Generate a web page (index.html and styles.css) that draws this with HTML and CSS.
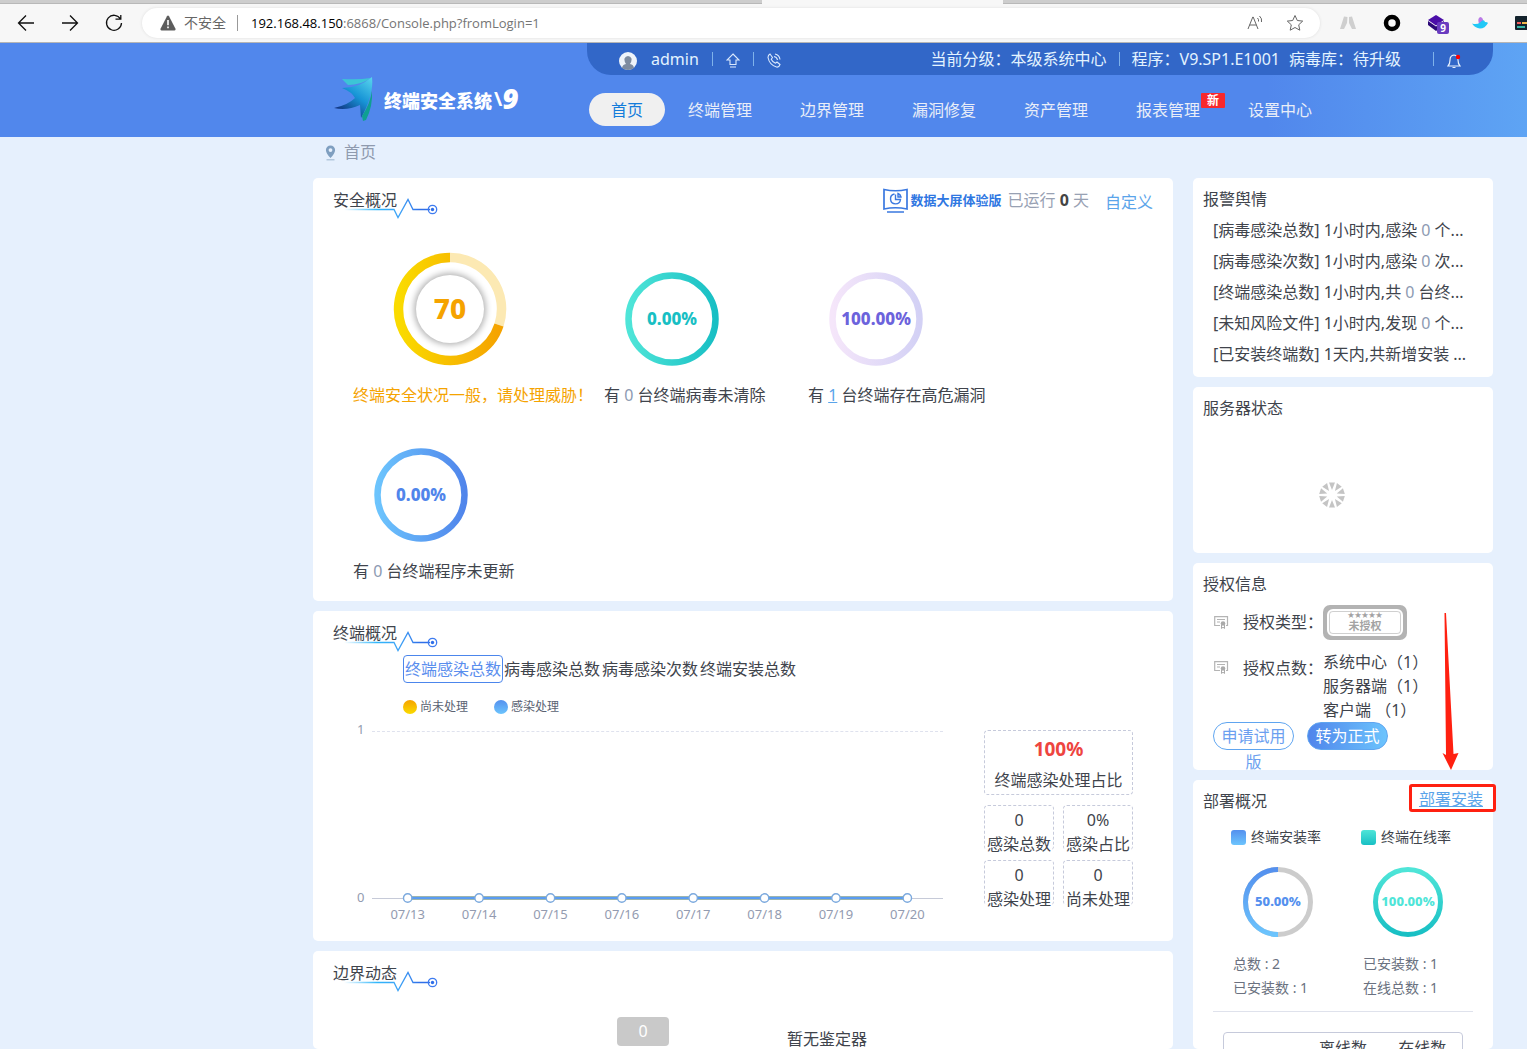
FILE: index.html
```html
<!DOCTYPE html>
<html lang="zh-CN">
<head>
<meta charset="utf-8">
<meta name="viewport" content="width=device-width, initial-scale=1">
<title>终端安全系统</title>
<link rel="stylesheet" href="styles.css">
</head>
<body>
<svg class="defs" aria-hidden="true">
  <defs>
    <linearGradient id="pulse" gradientUnits="userSpaceOnUse" x1="0" y1="0" x2="95" y2="0"><stop offset="0" stop-color="#2fb6fb" stop-opacity="0"/><stop offset=".35" stop-color="#2fb6fb"/><stop offset=".6" stop-color="#3fa0f5"/><stop offset=".8" stop-color="#2f6fe8"/></linearGradient>
    <linearGradient id="gold"><stop offset="0" stop-color="#fadb00"/><stop offset="1" stop-color="#f5a300"/></linearGradient>
    <linearGradient id="teal"><stop offset="0" stop-color="#4fe5d8"/><stop offset="1" stop-color="#18bfc4"/></linearGradient>
    <linearGradient id="tealDown" x1="0" y1="0" x2="0" y2="1"><stop offset="0" stop-color="#4fe5d8"/><stop offset="1" stop-color="#18bfc4"/></linearGradient>
    <linearGradient id="lilac"><stop offset="0" stop-color="#f5e6fa"/><stop offset="1" stop-color="#d3d1f5"/></linearGradient>
    <linearGradient id="blue"><stop offset="0" stop-color="#6cc4fd"/><stop offset="1" stop-color="#5085eb"/></linearGradient>
    <linearGradient id="blueDown" x1="0" y1="0" x2="0" y2="1"><stop offset="0" stop-color="#5490ee"/><stop offset="1" stop-color="#6cc4fd"/></linearGradient>
    <symbol id="pulse-line" viewBox="0 0 95 22"><path d="M0 12.5H50L54 20.5L64 2.5L69 12.5H86" fill="none" stroke="url(#pulse)" stroke-width="1.3"/><circle cx="88.500" cy="12.500" r="4.200" fill="none" stroke="#3d7bf0" stroke-width="1.300"/><circle cx="88.500" cy="12.500" r="1.700" fill="#2f6fe8"/></symbol>
    <symbol id="cert" viewBox="0 0 15 13"><path d="M6 9.500H.7V.7H13.500V9.500H12M3 3.500H11M3 6H6" fill="none" stroke="#b4b4b4" stroke-width="1.200"/><circle cx="9" cy="7.500" r="2.300" fill="#aaa"/><path d="M7.500 9V12.500L9 11.200L10.500 12.500V9" fill="none" stroke="#aaa"/></symbol>
  </defs>
</svg>

<div class="browser">
  <div class="tabstrip"><span class="tab-gap"></span></div>
  <div class="toolbar">
    <button class="tool" aria-label="后退"><svg width="18" height="18" viewBox="0 0 18 18"><path d="M17 9H2M9 1.500L1.500 9L9 16.500"/></svg></button>
    <button class="tool" aria-label="前进"><svg width="18" height="18" viewBox="0 0 18 18"><path d="M1 9H16M9 1.500L16.500 9L9 16.500"/></svg></button>
    <button class="tool" aria-label="刷新"><svg width="18" height="18" viewBox="0 0 18 18"><path d="M15.500 5A7.500 7.500 0 1 0 16.500 9M10.500 5.200H15.800V1"/></svg></button>
    <div class="address">
      <svg width="16" height="16" viewBox="0 0 16 16"><path d="M8 .5Q8.600.5 9 1.200L15.500 13.800Q16 15.500 14.500 15.500H1.500Q0 15.500.5 13.800L7 1.200Q7.400.5 8 .5Z" fill="#5c5c5c"/><path d="M8 5V10.200M8 11.500V13.300" stroke="#fff" stroke-width="1.600"/></svg>
      <span class="insecure">不安全</span>
      <span class="address-sep"></span>
      <span class="url"><span class="host">192.168.48.150</span>:6868/Console.php?fromLogin=1</span>
      <svg class="read" width="17" height="16" viewBox="0 0 17 16"><path d="M1 14L5.800 2H6.200L11 14M2.600 10H9.400M10.500 3Q12 4.500 11.500 6.500M12.500 1Q15.300 3.500 14.500 7" fill="none" stroke="#666"/></svg>
      <svg width="18" height="18" viewBox="0 0 18 18"><path d="M9 1.500L11.300 6.500L16.700 7.100L12.700 10.800L13.800 16.200L9 13.500L4.200 16.200L5.300 10.800L1.300 7.100L6.700 6.500Z" fill="none" stroke="#666" stroke-linejoin="round"/></svg>
    </div>
    <div class="extensions">
      <svg width="18" height="18" viewBox="0 0 18 18"><path d="M5 2.500L8.500 3L8 9L5 15H1ZM10 3L13 2.500L17 15H13L10 9Z" fill="#cfcfcf"/></svg>
      <svg width="18" height="18" viewBox="0 0 18 18"><circle cx="9" cy="9" r="6" fill="none" stroke="#000" stroke-width="4.500"/></svg>
      <span class="ext-badged"><svg width="18" height="18" viewBox="0 0 18 18"><path d="M9 1L17 6L9 11.500L1 6Z" fill="#4b0ea8"/><path d="M1 7L9 12.500L17 7V11L9 17L1 11Z" fill="#2c0878"/></svg><span class="ext-badge">9</span></span>
      <svg width="18" height="18" viewBox="0 0 18 18"><path d="M8 10Q6 4 9.500 3Q13 4 12 10Z" fill="#b97ae6"/><path d="M1 9.500Q6 11 9 8.500Q13 4.500 14 8Q16.500 8 17 9Q14 14.500 9 14.500Q4 14 1 9.500Z" fill="#21c8f6"/></svg>
      <svg width="18" height="18" viewBox="0 0 18 18"><rect y="2" width="18" height="14" rx="1" fill="#14232d"/><path d="M2 9H6" stroke="#f15b5b" stroke-width="2"/><path d="M7 9H12" stroke="#f0b84a" stroke-width="2"/><path d="M2 13H10" stroke="#37b6a8" stroke-width="2"/></svg>
    </div>
  </div>
</div>

<header class="header">
  <div class="logo">
    <svg width="44" height="46" viewBox="0 0 44 46">
      <defs><linearGradient id="bird" x1="1" y1="0" x2=".3" y2="1"><stop offset="0" stop-color="#5ad6ee"/><stop offset=".5" stop-color="#1794d6"/><stop offset="1" stop-color="#102a78"/></linearGradient></defs>
      <path d="M8 3Q24 4 37 2Q27 9 14 9Z" fill="#3cc5d6"/>
      <path d="M8 12Q25 12 38 1Q40 19 27 42L26 29Q13 35 0 32Q14 29 21 22Q18 16 8 12Z" fill="url(#bird)"/>
      <path d="M38 15Q39 30 32 44L29 45L28 40Q36 28 38 15Z" fill="#0f9f92"/>
    </svg>
    <span class="logo-text">终端安全系统</span><span class="logo-slash">\</span><span class="logo-nine">9</span>
  </div>
  <div class="header-main">
    <div class="userbar">
      <svg class="avatar" width="18" height="18" viewBox="0 0 18 18"><circle cx="9" cy="9" r="9" fill="#eef3fa"/><path d="M3 16Q3.500 12.500 7 12Q5 9 5.500 6.500Q6.500 4 9 4T12.500 6.500Q13 9 11 12Q14.500 12.500 15 16Q9 20 3 16Z" fill="#7d8ba0"/></svg>
      <span class="username">admin</span>
      <span class="sep"></span>
      <svg width="14" height="15" viewBox="0 0 14 15"><path d="M7 1L13 7H10V11.500H4V7H1ZM4 14H10" fill="none" stroke="#dbe9fd" stroke-width="1.100"/></svg>
      <span class="sep"></span>
      <svg width="14" height="15" viewBox="0 0 14 15"><path d="M3 1L5.500 4.500L4.200 6.200Q5.500 9 8.500 10.200L10 9L13 11.500Q12 14.500 9.500 14Q2.500 12 1 4.500Q1 2 3 1ZM7 3.500Q10 4 10.500 7M8 1Q12.500 2 13 6.500" fill="none" stroke="#dbe9fd" stroke-width="1.100"/></svg>
      <span class="level">当前分级：本级系统中心</span>
      <span class="sep"></span>
      <span class="program">程序：V9.SP1.E1001</span>
      <span class="virus">病毒库：待升级</span>
      <span class="sep"></span>
      <svg class="bell" width="14" height="16" viewBox="0 0 14 16"><path d="M7 2Q3 2.500 3 7Q3 11 1 13H13Q11 11 11 7Q11 2.500 7 2ZM5.500 14.500H8.500" fill="none" stroke="#e8f1fd" stroke-width="1.200"/><circle cx="11" cy="4" r="2.200" fill="#f00"/></svg>
    </div>
    <nav class="nav">
      <a class="nav-item active" href="#">首页</a>
      <a class="nav-item" href="#">终端管理</a>
      <a class="nav-item" href="#">边界管理</a>
      <a class="nav-item" href="#">漏洞修复</a>
      <a class="nav-item" href="#">资产管理</a>
      <a class="nav-item" href="#">报表管理<span class="new">新</span></a>
      <a class="nav-item" href="#">设置中心</a>
    </nav>
  </div>
</header>

<div class="breadcrumb">
  <svg width="11" height="16" viewBox="0 0 11 16"><path d="M5.500.500A4.600 4.600 0 0 1 10.100 5Q10 8.500 5.500 13Q1 8.500.900 5A4.600 4.600 0 0 1 5.500.500ZM5.500 3.200A1.900 1.900 0 1 0 5.500 7A1.900 1.900 0 1 0 5.500 3.200Z" fill="#7f9fc0" fill-rule="evenodd"/><path d="M1.500 14.800H9.500" stroke="#a5bdd5" stroke-width="1.200"/></svg>
  <span>首页</span>
</div>

<main class="content">
  <div class="column">
    <section class="card security">
      <div class="card-head">
        <h2 class="title">安全概况<svg class="pulse" width="95" height="22"><use href="#pulse-line"/></svg></h2>
        <div class="head-tools">
          <svg width="25" height="25" viewBox="0 0 25 25"><path d="M1 1.500Q12.500 4 24 1.500V21Q12.500 18.500 1 21ZM4 24H21" fill="none" stroke="#3a78e0" stroke-width="1.700"/><path d="M11.500 6A5 5 0 1 0 17.500 11.500H12.500V6.500M15 5.500Q17.500 6.500 18 9H15Z" fill="none" stroke="#3a78e0" stroke-width="1.400"/></svg>
          <a class="bigscreen" href="#">数据大屏体验版</a>
          <span class="uptime">已运行 <b>0</b> 天</span>
          <a class="custom" href="#">自定义</a>
        </div>
      </div>
      <div class="gauges">
        <div class="gauge main-gauge">
          <svg width="114" height="114" viewBox="0 0 114 114">
            <defs><filter id="soft" x="-30%" y="-30%" width="160%" height="160%"><feGaussianBlur stdDeviation="3"/></filter></defs>
            <path d="M57 5.500A51.500 51.500 0 0 1 106 73" fill="none" stroke="#fce9b3" stroke-width="9.500"/>
            <path d="M106 73A51.500 51.500 0 1 1 57 5.500" fill="none" stroke="url(#gold)" stroke-width="9.500"/>
            <circle cx="57" cy="57" r="36" fill="#000" opacity=".3" filter="url(#soft)"/>
            <circle cx="57" cy="57" r="34" fill="#fff"/>
            <text class="score" x="57" y="67" text-anchor="middle">70</text>
          </svg>
          <p>终端安全状况一般，请处理威胁！</p>
        </div>
        <div class="gauge teal">
          <svg width="94" height="94"><circle cx="47" cy="47" r="43.500" fill="none" stroke="url(#teal)" stroke-width="6.500"/><text x="47" y="53" text-anchor="middle">0.00%</text></svg>
          <p>有 <i>0</i> 台终端病毒未清除</p>
        </div>
        <div class="gauge lilac">
          <svg width="94" height="94"><circle cx="47" cy="47" r="43.500" fill="none" stroke="url(#lilac)" stroke-width="6.500"/><text x="47" y="53" text-anchor="middle">100.00%</text></svg>
          <p>有 <a href="#">1</a> 台终端存在高危漏洞</p>
        </div>
        <div class="gauge blue">
          <svg width="94" height="94"><circle cx="47" cy="47" r="43.500" fill="none" stroke="url(#blue)" stroke-width="6.500"/><text x="47" y="53" text-anchor="middle">0.00%</text></svg>
          <p>有 <i>0</i> 台终端程序未更新</p>
        </div>
      </div>
    </section>

    <section class="card terminals">
      <h2 class="title">终端概况<svg class="pulse" width="95" height="22"><use href="#pulse-line"/></svg></h2>
      <div class="tabs">
        <button class="tab selected">终端感染总数</button>
        <button class="tab">病毒感染总数</button>
        <button class="tab">病毒感染次数</button>
        <button class="tab">终端安装总数</button>
      </div>
      <div class="legend">
        <span class="key"><span class="dot gold"></span>尚未处理</span>
        <span class="key"><span class="dot azure"></span>感染处理</span>
      </div>
      <div class="overview">
        <div class="chart">
          <div class="y-axis"><span>1</span><span>0</span></div>
          <div class="plot">
            <svg class="series" width="100%" height="12">
              <line x1="6.25%" y1="6" x2="93.75%" y2="6" stroke="#9db5ae" stroke-width="4"/>
              <line x1="6.25%" y1="6" x2="93.75%" y2="6" stroke="#5a9cf2" stroke-width="2"/>
              <g fill="#fff" stroke="#7ba9de" stroke-width="1.400"><circle cx="6.25%" cy="6" r="4.200"/><circle cx="18.75%" cy="6" r="4.200"/><circle cx="31.25%" cy="6" r="4.200"/><circle cx="43.75%" cy="6" r="4.200"/><circle cx="56.25%" cy="6" r="4.200"/><circle cx="68.75%" cy="6" r="4.200"/><circle cx="81.25%" cy="6" r="4.200"/><circle cx="93.75%" cy="6" r="4.200"/></g>
            </svg>
          </div>
          <div class="x-axis"><span>07/13</span><span>07/14</span><span>07/15</span><span>07/16</span><span>07/17</span><span>07/18</span><span>07/19</span><span>07/20</span></div>
        </div>
        <div class="stats">
          <div class="stat wide"><strong>100%</strong><span>终端感染处理占比</span></div>
          <div class="stat"><span>0</span><span>感染总数</span></div>
          <div class="stat"><span>0%</span><span>感染占比</span></div>
          <div class="stat"><span>0</span><span>感染处理</span></div>
          <div class="stat"><span>0</span><span>尚未处理</span></div>
        </div>
      </div>
    </section>

    <section class="card border-card">
      <h2 class="title">边界动态<svg class="pulse" width="95" height="22"><use href="#pulse-line"/></svg></h2>
      <div class="border-body">
        <span class="count">0</span>
        <span class="none">暂无鉴定器</span>
      </div>
    </section>
  </div>

  <aside class="column side">
    <section class="card">
      <h2 class="title">报警舆情</h2>
      <ul class="alerts">
        <li>[病毒感染总数] 1小时内,感染 <i>0</i> 个...</li>
        <li>[病毒感染次数] 1小时内,感染 <i>0</i> 次...</li>
        <li>[终端感染总数] 1小时内,共 <i>0</i> 台终...</li>
        <li>[未知风险文件] 1小时内,发现 <i>0</i> 个...</li>
        <li>[已安装终端数] 1天内,共新增安装 ...</li>
      </ul>
    </section>
    <section class="card">
      <h2 class="title">服务器状态</h2>
      <div class="loading">
        <svg width="26" height="26" viewBox="-13 -13 26 26" fill="#c4c4c4"><path id="ray" d="M-3 -12.500H3L0 -5Z"/><use href="#ray" transform="rotate(36)"/><use href="#ray" transform="rotate(72)"/><use href="#ray" transform="rotate(108)"/><use href="#ray" transform="rotate(144)"/><use href="#ray" transform="rotate(180)"/><use href="#ray" transform="rotate(216)"/><use href="#ray" transform="rotate(252)"/><use href="#ray" transform="rotate(288)"/><use href="#ray" transform="rotate(324)"/></svg>
      </div>
    </section>
    <section class="card license">
      <h2 class="title">授权信息</h2>
      <div class="license-row">
        <svg width="15" height="13"><use href="#cert"/></svg>
        <span class="license-label">授权类型：</span>
        <span class="stamp"><span class="stamp-inner"><small>★★★★★</small>未授权</span></span>
      </div>
      <div class="license-row points">
        <svg width="15" height="13"><use href="#cert"/></svg>
        <span class="license-label">授权点数：</span>
        <span class="license-values">系统中心（1）<br>服务器端（1）<br>客户端 （1）</span>
      </div>
      <div class="license-actions">
        <button class="pill outline">申请试用版</button>
        <button class="pill filled">转为正式</button>
      </div>
    </section>
    <section class="card deploy">
      <div class="card-head">
        <h2 class="title">部署概况</h2>
        <a class="install" href="#">部署安装</a>
      </div>
      <div class="rates">
        <div class="rate">
          <span class="rate-key"><span class="square azure"></span>终端安装率</span>
          <svg width="70" height="70"><circle cx="35" cy="35" r="32.500" fill="none" stroke="#ccc" stroke-width="5"/><path d="M35 67.500A32.500 32.500 0 0 1 35 2.500" fill="none" stroke="url(#blueDown)" stroke-width="5"/><text x="35" y="39" text-anchor="middle" fill="#5490ee">50.00%</text></svg>
          <p>总数 : 2<br>已安装数 : 1</p>
        </div>
        <div class="rate">
          <span class="rate-key"><span class="square mint"></span>终端在线率</span>
          <svg width="70" height="70"><circle cx="35" cy="35" r="32.500" fill="none" stroke="url(#tealDown)" stroke-width="5"/><text x="35" y="39" text-anchor="middle" fill="#4fe5d8">100.00%</text></svg>
          <p>已安装数 : 1<br>在线总数 : 1</p>
        </div>
      </div>
      <div class="online-wrap">
        <table class="online"><thead><tr><th></th><th>离线数</th><th>在线数</th></tr></thead></table>
      </div>
    </section>
    <svg class="arrow" width="20" height="158" viewBox="0 0 20 158"><path d="M3.500 0H5L12.500 141L17.500 140L10 157L1.500 140L5 142Z" fill="#ff2010"/></svg>
    <span class="mark"></span>
  </aside>
</main>
</body>
</html>
```
FILE: styles.css
```css
* { box-sizing: border-box; }
body {
  margin: 0;
  height: 100vh;
  overflow: hidden;
  display: flex;
  flex-direction: column;
  background: #e6f0fd;
  color: #40444c;
  font: 16px/24px "Noto Sans", "Noto Sans CJK SC", sans-serif;
}
h2, p, ul { margin: 0; padding: 0; font-size: 16px; font-weight: 400; }
ul { list-style: none; }
a { color: #5aa4ea; text-decoration: none; }
button { font: inherit; color: inherit; background: none; border: 0; padding: 0; }
i { font-style: normal; color: #8d9ab2; }
svg { display: block; flex: none; }
.defs { position: absolute; width: 0; height: 0; }

.browser { flex: none; background: #f7f7f7; border-bottom: 1px solid #b5b5b5; }
.tabstrip { height: 4px; background: #cdcdcd; border-bottom: 1px solid #b8b8b8; display: flex; }
.tab-gap { width: 241px; height: 4px; margin-left: 762px; background: #f7f7f7; flex: none; }
.toolbar { height: 38px; display: flex; align-items: center; padding-left: 17px; overflow: hidden; }
.tool { width: 18px; height: 18px; margin-right: 26px; flex: none; }
.tool svg { fill: none; stroke: #111; stroke-width: 1.3; }
.address {
  flex: 1; height: 30px; margin-left: -7px; padding: 0 16px 0 18px;
  display: flex; align-items: center;
  background: #fff; border-radius: 15px; box-shadow: 0 0 3px #ddd;
  font-size: 14px; color: #757575; white-space: nowrap;
}
.insecure { margin-left: 8px; color: #666; }
.address-sep { width: 1px; height: 16px; margin: 0 13px 0 11px; background: #999; }
.url { flex: 1; font-family: "Open Sans", "Noto Sans", sans-serif; font-size: 13px; }
.host { color: #000; }
.read { margin-right: 22px; }
.extensions { width: 207px; flex: none; padding-left: 19px; display: flex; gap: 26px; }
.ext-badged { position: relative; flex: none; height: 18px; }
.ext-badge {
  position: absolute; left: 10px; top: 8px; width: 12px; height: 12px; border-radius: 2px;
  background: #6a3cc0; color: #fff; font: 700 10px/12px "Noto Sans", sans-serif; text-align: center;
}

.header {
  flex: none; height: 94px; padding: 0 34px 0 313px; display: flex;
  background: linear-gradient(90deg, #5187ec 83%, #5ea4f4 100%);
}
.logo { width: 274px; flex: none; padding: 33px 0 0 21px; display: flex; align-items: flex-start; color: #fff; white-space: nowrap; }
.logo-text { margin-left: 6px; font: 900 18px/48px "Noto Sans CJK SC", sans-serif; }
.logo-slash { margin-left: 2px; font: 700 20px/46px "Noto Sans", sans-serif; }
.logo-nine { font: italic 900 28px/44px "Noto Sans", sans-serif; }
.header-main { flex: 1; }
.userbar {
  height: 32px; padding: 0 32px; display: flex; align-items: center;
  background: #3267c8; border-radius: 0 0 24px 24px; color: #e3f3ff; white-space: nowrap;
}
.userbar svg { margin-top: 3px; }
.username { margin-left: 14px; }
.sep { width: 1px; height: 14px; margin: 0 13px; background: #7fb2ea; }
.level { margin-left: auto; }
.level + .sep { margin: 0 12px; }
.virus { margin-left: 9px; }
.virus + .sep { margin-left: 32px; }
.nav { display: flex; align-items: center; margin-top: 18px; padding-left: 2px; white-space: nowrap; }
.nav-item { position: relative; height: 33px; padding: 0 24px; line-height: 35px; color: #e9eef8; }
.nav-item.active { padding: 0 22px; margin-right: -1px; background: #f0f0f0; border-radius: 17px; color: #147cdb; }
.new {
  position: absolute; left: 89px; top: 0; width: 24px; height: 15px; border-radius: 1px;
  background: #f8282c; color: #fff; font-size: 12px; font-weight: 700; line-height: 15px; text-align: center;
}

.breadcrumb { flex: none; height: 41px; padding: 3px 34px 0 325px; display: flex; align-items: flex-start; gap: 8px; color: #8f9aae; }
.breadcrumb svg { margin-top: 5px; }

.content { flex: 1; min-height: 0; padding: 0 34px 0 313px; display: grid; grid-template-columns: 1fr 300px; gap: 20px; }
.column { min-height: 0; display: flex; flex-direction: column; gap: 10px; }
.side { position: relative; }
.card { flex: none; padding: 9px 10px 10px; background: #fff; border-radius: 5px; }
.card-head { display: flex; justify-content: space-between; }
.column:not(.side) > .card { padding: 10px 20px; }
.title { position: relative; align-self: flex-start; }
.pulse { position: absolute; left: 11px; top: 9px; }

.column:not(.side) > .card.security { padding-bottom: 18px; }
.head-tools { display: flex; align-items: center; height: 24px; white-space: nowrap; }
.bigscreen { margin-left: 2px; font-size: 13px; font-weight: 700; color: #2f77e2; }
.uptime { margin-left: 6px; color: #98a1b3; }
.uptime b { color: #444; }
.custom { margin-left: 16px; padding-top: 4px; }
.gauges { margin: 40px 0 0 20px; display: flex; flex-wrap: wrap; align-items: flex-end; row-gap: 41px; white-space: nowrap; }
.gauge { width: 204px; }
.gauge svg { margin: 0 0 17px 21px; }
.main-gauge { width: 251px; color: #f5a300; }
.gauge.main-gauge svg { margin-left: 40px; }
.gauge text { font-size: 17px; font-weight: 800; }
.gauge .score { font-size: 28px; fill: #f5a300; }
.teal text { fill: #18bfc4; }
.lilac text { fill: #6c63dc; }
.blue text { fill: #5085eb; }
.gauge a { text-decoration: underline; }

.tabs { margin: 10px 0 0 70px; display: flex; white-space: nowrap; }
.tab { height: 28px; padding: 0 1px; }
.tab.selected { border: 1px solid #4c86ec; border-radius: 4px; color: #5a8eee; }
.legend { margin: 12px 0 0 70px; display: flex; gap: 26px; font-size: 12px; }
.key { display: flex; align-items: center; gap: 3px; color: #5a6272; }
.dot { width: 14px; height: 14px; border-radius: 50%; }
.gold { background: linear-gradient(#f5a300, #fadb00); }
.azure { background: linear-gradient(#5490ee, #6cc4fd); }
.mint { background: linear-gradient(#4fe5d8, #18bfc4); }
.overview { margin: 11px 20px 8px; display: flex; gap: 41px; }
.chart { flex: 1; margin-top: 1px; display: grid; grid-template: 168px 24px / 15px 1fr; column-gap: 4px; font-size: 13px; color: #939bb0; }
.y-axis { display: flex; flex-direction: column; justify-content: space-between; margin: -14px 0 -10px; padding-left: 4px; }
.plot { border-top: 1px dashed #dfe2ee; border-bottom: 1px solid #c6cad8; display: flex; align-items: flex-end; }
.series { margin-bottom: -6px; }
.x-axis { grid-column: 2; display: grid; grid-template-columns: repeat(8, 1fr); text-align: center; line-height: 30px; }
.stats { width: 149px; flex: none; display: grid; grid-template-columns: 1fr 1fr; align-content: start; gap: 10px 9px; text-align: center; white-space: nowrap; }
.stat { height: 45px; padding-top: 2px; display: flex; flex-direction: column; align-items: center; border: 1px dashed #c6cadb; border-bottom: 0; border-radius: 4px; }
.stat.wide { grid-column: span 2; height: 65px; padding-top: 6px; gap: 7px; border-bottom: 1px dashed #c6cadb; }
.stat strong { font-size: 19px; color: #ee453f; }

.column:not(.side) > .card.border-card { flex: 1; min-height: 0; overflow: hidden; padding-bottom: 0; }
.border-body { display: flex; align-items: flex-start; margin: 32px 0 0 284px; }
.count { width: 52px; height: 29px; border-radius: 4px; background: #c9c9c9; color: #fff; text-align: center; line-height: 29px; }
.none { margin: 10px 0 0 118px; }

.alerts { margin: 4px 0 -3px 10px; line-height: 31px; white-space: nowrap; }
.loading { height: 123px; padding: 62px 23px 0 0; display: flex; align-items: flex-start; justify-content: center; }
.card.license { height: 207px; overflow: hidden; }
.license-row { margin: 3px 0 0 11px; display: flex; align-items: center; height: 46px; white-space: nowrap; }
.license-label { width: 80px; margin: 0 0 0 14px; }
.points { align-items: flex-start; height: 72px; margin-top: 5px; }
.points svg { margin-top: 11px; }
.points .license-label { margin-top: 6px; }
.license-row .license-values, .stamp { flex: none; }
.stamp { width: 84px; height: 35px; padding: 6px; border-radius: 7px; background: #b3b3b3; }
.stamp-inner {
  display: flex; flex-direction: column; align-items: center; height: 23px; border-radius: 4px;
  outline: 2px solid #fff; background: #fff; color: #a3a3a3; font-size: 11px; font-weight: 700; line-height: 14px;
  box-shadow: inset 0 0 0 1px #d0d0d0;
}
.stamp small { font-size: 7px; line-height: 8px; }
.license-actions { margin: 0 0 0 10px; display: flex; gap: 13px; }
.pill { width: 81px; height: 28px; padding: 0 7px; border: 1px solid #5fa5f0; border-radius: 14px; line-height: 26px; display: flex; align-items: flex-start; justify-content: center; }
.outline { color: #6b9ff0; }
.filled { background: linear-gradient(90deg, #5085eb, #6cc4fd); color: #fff; }

.card.deploy { flex: 1; min-height: 0; overflow: hidden; }
.install { text-decoration: underline; margin-top: -2px; }
.rates { margin: 13px 10px 0; display: grid; grid-template-columns: 1fr 1fr; padding-bottom: 11px; border-bottom: 1px solid #dfe2ec; font-size: 14px; }
.rate { display: flex; flex-direction: column; align-items: center; }
.rate-key { align-self: flex-start; margin-left: 18px; display: flex; align-items: center; gap: 5px; line-height: 22px; }
.square { width: 15px; height: 15px; border-radius: 3px; }
.rate svg { margin: 19px 0 15px; }
.rate text { font-size: 13px; font-weight: 800; }
.rate p { align-self: flex-start; margin-left: 20px; font-size: 14px; color: #6a7180; }
.online-wrap { margin: 20px 20px 0; border: 1px solid #c6cadb; border-radius: 4px; }
.online { width: 100%; border-collapse: collapse; table-layout: fixed; }
.online th { height: 30px; padding: 0; font-weight: 400; }

.arrow { position: absolute; right: 32px; top: 435px; }
.mark { position: absolute; right: -3px; top: 606px; width: 87px; height: 28px; border: 3px solid #ff2010; border-radius: 3px; }
```
